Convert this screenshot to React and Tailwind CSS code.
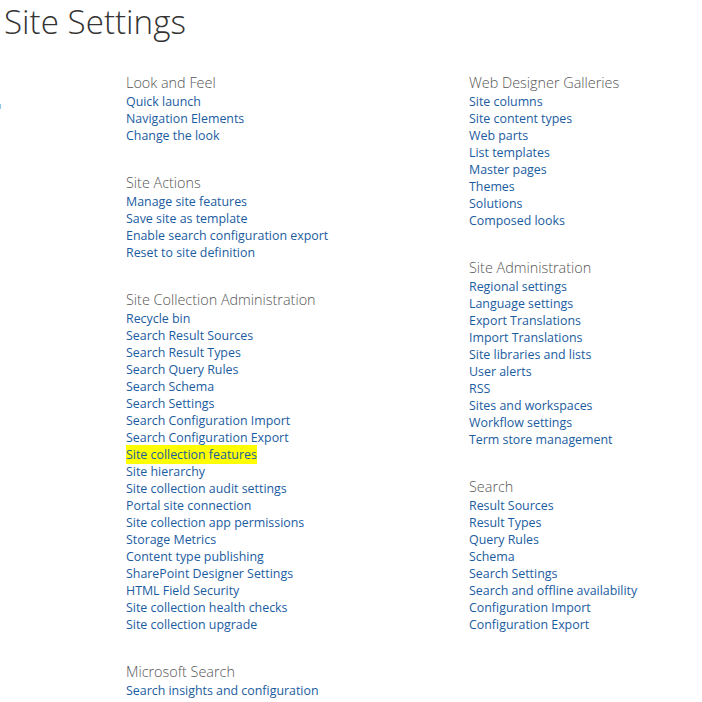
const left = [
  {
    title: "Look and Feel",
    links: ["Quick launch", "Navigation Elements", "Change the look"],
  },
  {
    title: "Site Actions",
    links: [
      "Manage site features",
      "Save site as template",
      "Enable search configuration export",
      "Reset to site definition",
    ],
  },
  {
    title: "Site Collection Administration",
    links: [
      "Recycle bin",
      "Search Result Sources",
      "Search Result Types",
      "Search Query Rules",
      "Search Schema",
      "Search Settings",
      "Search Configuration Import",
      "Search Configuration Export",
      "Site collection features",
      "Site hierarchy",
      "Site collection audit settings",
      "Portal site connection",
      "Site collection app permissions",
      "Storage Metrics",
      "Content type publishing",
      "SharePoint Designer Settings",
      "HTML Field Security",
      "Site collection health checks",
      "Site collection upgrade",
    ],
  },
  {
    title: "Microsoft Search",
    links: ["Search insights and configuration"],
  },
];

const right = [
  {
    title: "Web Designer Galleries",
    links: [
      "Site columns",
      "Site content types",
      "Web parts",
      "List templates",
      "Master pages",
      "Themes",
      "Solutions",
      "Composed looks",
    ],
  },
  {
    title: "Site Administration",
    links: [
      "Regional settings",
      "Language settings",
      "Export Translations",
      "Import Translations",
      "Site libraries and lists",
      "User alerts",
      "RSS",
      "Sites and workspaces",
      "Workflow settings",
      "Term store management",
    ],
  },
  {
    title: "Search",
    links: [
      "Result Sources",
      "Result Types",
      "Query Rules",
      "Schema",
      "Search Settings",
      "Search and offline availability",
      "Configuration Import",
      "Configuration Export",
    ],
  },
];

function Section({ title, links }) {
  return (
    <div className="mb-[29px]">
      <h3 className="h-[20px] pt-[1px] text-[14.4px] leading-[19px] font-light text-[#555555]">{title}</h3>
      <ul>
        {links.map((l) => (
          <li key={l} className="h-[17px] leading-[17px]">
            <a
              href="#"
              className={`text-[12.4px] text-[#1b5c9f] ${
                l === "Site collection features" ? "bg-[#ffff00] py-[1px]" : ""
              }`}
            >
              {l}
            </a>
          </li>
        ))}
      </ul>
    </div>
  );
}

export default function App() {
  return (
    <div className="relative min-h-[702px] bg-white font-['Open_Sans',_sans-serif]">
      {/* clipped nav edge on the far left */}
      <span className="absolute left-0 top-[104px] h-[5px] w-[1px] bg-[#8cc8ee]" />
      <h1 className="pl-[4px] pt-[2px] h-[72px] text-[33.2px] leading-[40px] font-light text-[#333333]">
        Site Settings
      </h1>
      <div className="grid grid-cols-[343px_1fr] pl-[126px]">
        <div>
          {left.map((s) => (
            <Section key={s.title} {...s} />
          ))}
        </div>
        <div>
          {right.map((s) => (
            <Section key={s.title} {...s} />
          ))}
        </div>
      </div>
    </div>
  );
}
